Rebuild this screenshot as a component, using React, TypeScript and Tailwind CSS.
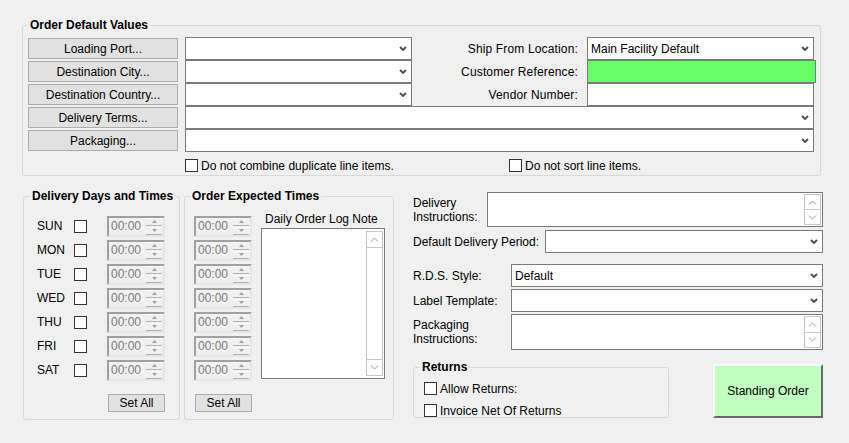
import type { ReactNode } from "react";

const days = ["SUN", "MON", "TUE", "WED", "THU", "FRI", "SAT"];

function Chevron() {
  return (
    <svg width="8" height="5" viewBox="0 0 8 5" className="shrink-0">
      <polyline points="1,1 4,4 7,1" fill="none" stroke="#4a4a4a" strokeWidth="1.8" />
    </svg>
  );
}

function ScrollArrow({ up }: { up?: boolean }) {
  return (
    <svg width="9" height="5" viewBox="0 0 9 5">
      <polyline
        points={up ? "1,4.5 4.5,1 8,4.5" : "1,0.5 4.5,4 8,0.5"}
        fill="none"
        stroke="#9a9a9a"
        strokeWidth="1"
      />
    </svg>
  );
}

function Combo({ className, value }: { className: string; value?: string }) {
  return (
    <div
      className={`flex h-[23px] shrink-0 items-center justify-between border border-[#7a7a7a] bg-white pl-[3px] pr-[4px] ${className}`}
    >
      <span>{value}</span>
      <Chevron />
    </div>
  );
}

function WinButton({ children, className }: { children: ReactNode; className: string }) {
  return (
    <div
      className={`flex shrink-0 items-center justify-center border border-[#adadad] bg-[#e1e1e1] ${className}`}
    >
      {children}
    </div>
  );
}

function Box() {
  return <span className="block h-[13px] w-[13px] shrink-0 border border-[#333] bg-white" />;
}

function Spinner() {
  return (
    <div className="flex h-[21px] w-[58px] shrink-0 items-center border-2 border-t-[#a0a0a0] border-l-[#a0a0a0] border-r-[#e6e6e6] border-b-[#e6e6e6]">
      <span className="flex-1 pl-[2px] text-[#7b7b7b]">00:00</span>
      <div className="flex w-[17px] flex-col gap-[1px] pr-[1px]">
        <div className="flex h-[8px] items-center justify-center border-t border-b border-t-white border-b-[#b4b4b4]">
          <svg width="5" height="3" viewBox="0 0 5 3">
            <polygon points="0,3 2.5,0 5,3" fill="#a0a0a0" />
          </svg>
        </div>
        <div className="flex h-[8px] items-center justify-center border-t border-b border-t-white border-b-[#b4b4b4]">
          <svg width="5" height="3" viewBox="0 0 5 3">
            <polygon points="0,0 2.5,3 5,0" fill="#a0a0a0" />
          </svg>
        </div>
      </div>
    </div>
  );
}

function MemoBox({ className }: { className: string }) {
  return (
    <div className={`flex shrink-0 justify-end border border-[#7a7a7a] bg-white p-[1px] ${className}`}>
      <div className="flex w-[17px] flex-col">
        <div className="flex flex-1 items-center justify-center border border-[#c8c8c8]">
          <ScrollArrow up />
        </div>
        <div className="flex flex-1 items-center justify-center border border-t-0 border-[#c8c8c8]">
          <ScrollArrow />
        </div>
      </div>
    </div>
  );
}

function Legend({ children, className }: { children: ReactNode; className: string }) {
  return <legend className={`px-[2px] text-[12px] font-bold leading-[14px] ${className}`}>{children}</legend>;
}

function OrderDefaults() {
  const left = ["Loading Port...", "Destination City...", "Destination Country..."];
  const right = ["Ship From Location:", "Customer Reference:", "Vendor Number:"];
  return (
    <fieldset className="ml-[22px] w-[799px] rounded-[3px] border border-[#d9d9d9]">
      <Legend className="ml-[5px]">Order Default Values</Legend>
      <div className="pl-[5px] pt-[5px] pb-[3px]">
        {left.map((l, i) => (
          <div key={l} className="flex h-[23px] items-center">
            <WinButton className="h-[21px] w-[150px]">{l}</WinButton>
            <Combo className="ml-[7px] w-[227px]" />
            <span className="w-[175px] shrink-0 pr-[9px] text-right tracking-[0.15px]">{right[i]}</span>
            {i === 0 && <Combo className="w-[227px]" value="Main Facility Default" />}
            {i === 1 && <div className="h-[23px] w-[229px] shrink-0 border border-[#7a7a7a] bg-[#66ff66]" />}
            {i === 2 && <div className="h-[23px] w-[227px] shrink-0 border border-[#7a7a7a] bg-white" />}
          </div>
        ))}
        {["Delivery Terms...", "Packaging..."].map((l) => (
          <div key={l} className="flex h-[23px] items-center">
            <WinButton className="h-[21px] w-[150px]">{l}</WinButton>
            <Combo className="ml-[7px] w-[629px]" />
          </div>
        ))}
        <div className="ml-[157px] mt-[7px] flex h-[13px] items-center">
          <div className="flex w-[324px] items-center">
            <Box />
            <span className="ml-[3px]">Do not combine duplicate line items.</span>
          </div>
          <Box />
          <span className="ml-[3px]">Do not sort line items.</span>
        </div>
      </div>
    </fieldset>
  );
}

function DeliveryDays() {
  return (
    <fieldset className="w-[157px] shrink-0 rounded-[3px] border border-[#d9d9d9]">
      <Legend className="ml-[6px]">Delivery Days and Times</Legend>
      <div className="h-[216px] pl-[13px] pt-[11px]">
        {days.map((d) => (
          <div key={d} className="flex h-[24px] items-center">
            <span className="w-[37px]">{d}</span>
            <Box />
            <div className="ml-[20px]">
              <Spinner />
            </div>
          </div>
        ))}
        <WinButton className="ml-[71px] mt-[12px] h-[18px] w-[57px]">Set All</WinButton>
      </div>
    </fieldset>
  );
}

function OrderExpected() {
  return (
    <fieldset className="ml-[4px] w-[210px] shrink-0 rounded-[3px] border border-[#d9d9d9]">
      <Legend className="ml-[5px]">Order Expected Times</Legend>
      <div className="flex h-[216px]">
        <div className="pl-[9px] pt-[11px]">
          {days.map((d) => (
            <div key={d} className="flex h-[24px] items-center">
              <Spinner />
            </div>
          ))}
          <WinButton className="ml-[1px] mt-[12px] h-[18px] w-[57px]">Set All</WinButton>
        </div>
        <div className="ml-[9px] pt-[9px]">
          <div className="pl-[4px]">Daily Order Log Note</div>
          <div className="mt-[2px] flex h-[151px] w-[124px] justify-end border border-[#7a7a7a] bg-white pt-[2px] pr-[1px] pb-[2px]">
            <div className="flex w-[17px] flex-col border border-[#c8c8c8]">
              <div className="flex h-[16px] items-center justify-center border-b border-[#c8c8c8]">
                <ScrollArrow up />
              </div>
              <div className="flex-1" />
              <div className="flex h-[16px] items-center justify-center border-t border-[#c8c8c8]">
                <ScrollArrow />
              </div>
            </div>
          </div>
        </div>
      </div>
    </fieldset>
  );
}

function RightColumn() {
  return (
    <div className="ml-[19px] mt-[3px] w-[410px] shrink-0">
      <div className="flex h-[35px] items-center">
        <span className="w-[74px] shrink-0">
          Delivery
          <br />
          Instructions:
        </span>
        <MemoBox className="h-[35px] w-[336px]" />
      </div>
      <div className="mt-[3px] flex h-[23px] items-center">
        <span className="w-[132px] shrink-0">Default Delivery Period:</span>
        <Combo className="w-[278px]" />
      </div>
      <div className="mt-[11px] flex h-[23px] items-center">
        <span className="w-[98px] shrink-0">R.D.S. Style:</span>
        <Combo className="w-[312px]" value="Default" />
      </div>
      <div className="mt-[2px] flex h-[23px] items-center">
        <span className="w-[98px] shrink-0">Label Template:</span>
        <Combo className="w-[312px]" />
      </div>
      <div className="mt-[2px] flex h-[36px] items-center">
        <span className="w-[98px] shrink-0">
          Packaging
          <br />
          Instructions:
        </span>
        <MemoBox className="h-[36px] w-[312px]" />
      </div>
      <div className="mt-[10px] flex items-start">
        <fieldset className="w-[256px] shrink-0 rounded-[3px] border border-[#d9d9d9]">
          <Legend className="ml-[6px]">Returns</Legend>
          <div className="pl-[10px] pt-[8px]">
            <div className="flex h-[13px] items-center">
              <Box />
              <span className="ml-[3px]">Allow Returns:</span>
            </div>
            <div className="mt-[9px] flex h-[13px] items-center">
              <Box />
              <span className="ml-[3px]">Invoice Net Of Returns</span>
            </div>
          </div>
        </fieldset>
        <div className="ml-[44px] mt-[4px] flex h-[54px] w-[110px] shrink-0 items-center justify-center border-2 border-t-white border-l-white border-r-[#696969] border-b-[#696969] bg-[#c0ffc0]">
          Standing Order
        </div>
      </div>
    </div>
  );
}

export default function App() {
  return (
    <div className="h-[443px] w-[849px] overflow-hidden bg-[#f0f0f0] pt-[18px] font-['Liberation_Sans',Arial,sans-serif] text-[12px] leading-[14px] text-black">
      <OrderDefaults />
      <div className="ml-[23px] mt-[13px] flex items-start">
        <DeliveryDays />
        <OrderExpected />
        <RightColumn />
      </div>
    </div>
  );
}
